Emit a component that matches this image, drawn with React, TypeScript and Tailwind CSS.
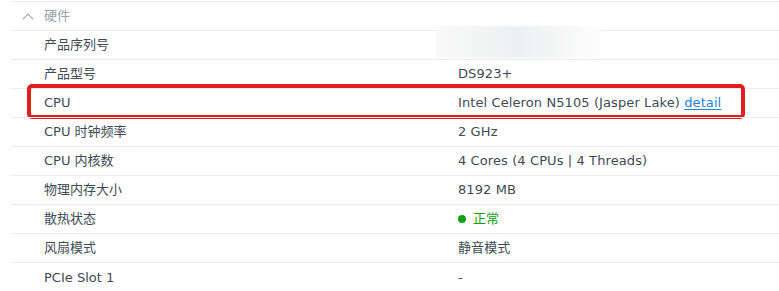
import React from "react";

type Row = {
  label: string;
  value: React.ReactNode;
  highlight?: boolean;
};

const rows: Row[] = [
  {
    label: "产品序列号",
    value: (
      <div className="-ml-[22px] -mt-[6px] h-[32px] w-[164px] bg-gradient-to-r from-[#f9f9f9] via-[#eeeff0] to-[#fdfdfd] blur-[1px]" />
    ),
  },
  { label: "产品型号", value: "DS923+" },
  {
    label: "CPU",
    value: (
      <span>
        Intel Celeron N5105 (Jasper Lake){" "}
        <span className="text-[#1f7fe0] underline underline-offset-2">detail</span>
      </span>
    ),
    highlight: true,
  },
  { label: "CPU 时钟频率", value: "2 GHz" },
  { label: "CPU 内核数", value: "4 Cores (4 CPUs | 4 Threads)" },
  { label: "物理内存大小", value: "8192 MB" },
  {
    label: "散热状态",
    value: (
      <span className="flex items-center gap-[7px] text-[#12a012]">
        <span className="inline-block h-[8px] w-[8px] rounded-full bg-[#12a012]" />
        正常
      </span>
    ),
  },
  { label: "风扇模式", value: "静音模式" },
  { label: "PCIe Slot 1", value: "-" },
];

const App: React.FC = () => {
  return (
    <div
      className="h-[291px] w-[779px] overflow-hidden bg-white pt-[1px] pl-[11px] text-[13px] text-[#414b55]"
      style={{ fontFamily: '"DejaVu Sans", Verdana, "Noto Sans CJK SC", sans-serif' }}
    >
      <div className="flex h-[29px] items-center border-t border-[#e8ebf0]">
        <svg
          width="12"
          height="7"
          viewBox="0 0 12 7"
          className="ml-[11px] mr-[10px]"
          fill="none"
          stroke="#a3a9b1"
          strokeWidth="1.2"
        >
          <path d="M0.8 6.3 L6 1.1 L11.2 6.3" />
        </svg>
        <span className="text-[#9aa1a9]">硬件</span>
      </div>
      {rows.map((row, idx) => (
        <div
          key={idx}
          className="relative flex h-[29px] items-center border-t border-[#e8ebf0] last:h-[30px]"
        >
          <div className="w-[447px] shrink-0 pl-[33px]">{row.label}</div>
          <div className="flex items-center tracking-[0.1px]">{row.value}</div>
          {row.highlight && (
            <div className="pointer-events-none absolute -top-[5px] -bottom-[2px] left-[16px] right-[34px] rounded-[5px] border-[4px] border-[#e41c1c]" />
          )}
        </div>
      ))}
    </div>
  );
};

export default App;
